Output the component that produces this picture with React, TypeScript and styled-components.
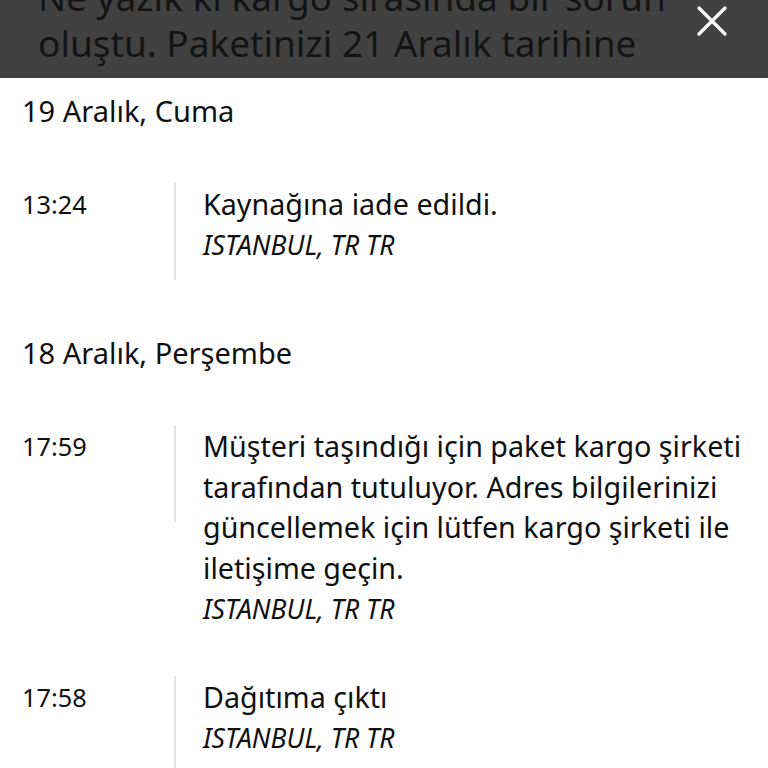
import styled, { createGlobalStyle } from 'styled-components'

interface Event {
  time: string
  text: string
  place: string
}

interface Day {
  title: string
  events: Event[]
}

const days: Day[] = [
  {
    title: '19 Aralık, Cuma',
    events: [
      { time: '13:24', text: 'Kaynağına iade edildi.', place: 'ISTANBUL, TR TR' }
    ]
  },
  {
    title: '18 Aralık, Perşembe',
    events: [
      {
        time: '17:59',
        text: 'Müşteri taşındığı için paket kargo şirketi tarafından tutuluyor. Adres bilgilerinizi güncellemek için lütfen kargo şirketi ile iletişime geçin.',
        place: 'ISTANBUL, TR TR'
      },
      { time: '17:58', text: 'Dağıtıma çıktı', place: 'ISTANBUL, TR TR' }
    ]
  }
]

const GlobalStyle = createGlobalStyle`
  html, body {
    margin: 0;
    background: #ffffff;
  }
  body {
    font-family: "Noto Sans", "Open Sans", sans-serif;
    color: #0f1111;
    width: 768px;
    height: 768px;
    overflow: hidden;
  }
`

export default function App() {
  return (
    <>
      <GlobalStyle />
      <Banner>
        <BannerText>
          Ne yazık ki kargo sırasında bir sorun oluştu. Paketinizi 21 Aralık tarihine
        </BannerText>
        <CloseButton aria-label="Kapat">
          <svg width="32" height="32" viewBox="0 0 32 32">
            <path d="M3 3 L29 29 M29 3 L3 29" stroke="#ffffff" strokeWidth="3.2" strokeLinecap="round" />
          </svg>
        </CloseButton>
      </Banner>
      <Timeline>
        {days.map(day => (
          <DaySection key={day.title}>
            <DayTitle>{day.title}</DayTitle>
            {day.events.map(ev => (
              <Entry key={ev.time}>
                <Time>{ev.time}</Time>
                <Rule />
                <Details>
                  <Status>{ev.text}</Status>
                  <Place>{ev.place}</Place>
                </Details>
              </Entry>
            ))}
          </DaySection>
        ))}
      </Timeline>
    </>
  )
}

const Banner = styled.header`
  display: flex;
  align-items: flex-start;
  justify-content: space-between;
  height: 78px;
  overflow: hidden;
  background: #414141;
  padding: 0 24px 0 38px;
  box-sizing: border-box;
`

const BannerText = styled.p`
  margin: -26px 0 0 0;
  width: 640px;
  font-size: 37px;
  line-height: 46px;
  color: #141414;
`

const CloseButton = styled.button`
  display: flex;
  background: transparent;
  border: 0;
  padding: 0;
  margin-top: 5px;
  margin-right: 16px;
`

const Timeline = styled.main`
  padding: 0 22px;
`

const DaySection = styled.section`
  display: flex;
  flex-direction: column;
`

const DayTitle = styled.h2`
  margin: 0;
  padding: 16px 0 56px;
  font-size: 29px;
  line-height: 34px;
  font-weight: 400;
`

const Entry = styled.div`
  display: flex;
  align-items: flex-start;
  margin-bottom: 48px;
  &:last-child {
    margin-bottom: 40px;
  }
`

const Time = styled.div`
  width: 152px;
  flex-shrink: 0;
  font-size: 25.3px;
  line-height: 41px;
`

const Rule = styled.div`
  width: 2px;
  height: 97px;
  flex-shrink: 0;
  background: #e3e3e3;
  margin-top: -1px;
`

const Details = styled.div`
  flex: 1;
  padding-left: 27px;
`

const Status = styled.div`
  font-size: 28.7px;
  line-height: 40.7px;
`

const Place = styled.div`
  font-size: 26.5px;
  line-height: 40px;
  font-style: italic;
`
